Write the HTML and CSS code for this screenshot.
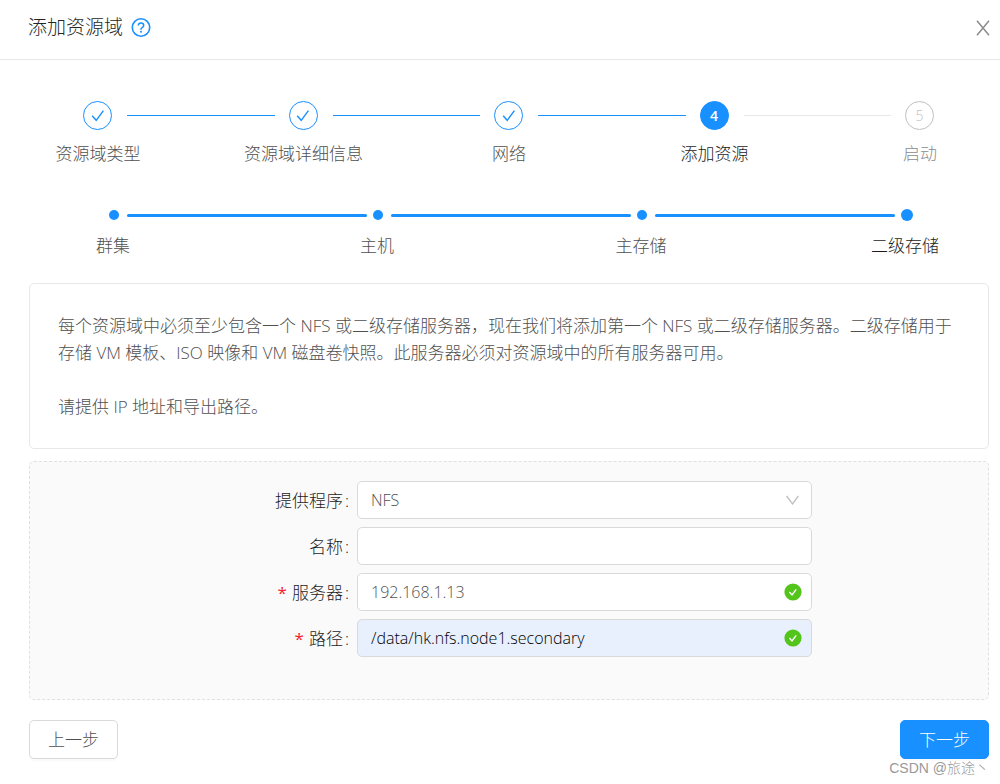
FILE: index.html
```html
<!DOCTYPE html>
<html lang="zh-CN">
<head>
<meta charset="utf-8">
<title>添加资源域</title>
<link rel="stylesheet" href="styles.css">
</head>
<body>
<header class="header">
  <h1 class="title">添加资源域</h1>
  <a class="help" href="#" aria-label="帮助">
    <svg viewBox="0 0 20 20" width="20" height="20" fill="none" stroke="currentColor">
      <circle cx="10" cy="9.5" r="8.7" stroke-width="1.6"/>
      <path d="M7.3 7.6C7.3 5.9 8.4 4.9 10 4.9s2.7 1 2.7 2.5c0 1.2-.8 1.8-1.6 2.3-.7.4-1.1.8-1.1 1.7v.3" stroke-width="1.5"/>
      <circle cx="10" cy="13.7" r="1" fill="currentColor" stroke="none"/>
    </svg>
  </a>
  <button class="close" type="button" aria-label="关闭">
    <svg viewBox="0 0 14 16" width="14" height="16" fill="none" stroke="currentColor" stroke-width="1.5"><path d="M1 .8l12 14.4M13 .8L1 15.2"/></svg>
  </button>
</header>
<main class="content">
  <ol class="steps">
    <li class="step done">
      <div class="head"><span class="circle"><svg viewBox="0 0 14 14" width="14" height="14"><path d="M1.2 6.7l4 4.6L12.4 1.7"/></svg></span></div>
      <div class="label">资源域类型</div>
    </li>
    <li class="step done">
      <div class="head"><span class="circle"><svg viewBox="0 0 14 14" width="14" height="14"><path d="M1.2 6.7l4 4.6L12.4 1.7"/></svg></span></div>
      <div class="label">资源域详细信息</div>
    </li>
    <li class="step done">
      <div class="head"><span class="circle"><svg viewBox="0 0 14 14" width="14" height="14"><path d="M1.2 6.7l4 4.6L12.4 1.7"/></svg></span></div>
      <div class="label">网络</div>
    </li>
    <li class="step active" aria-current="step">
      <div class="head"><span class="circle">4</span></div>
      <div class="label">添加资源</div>
    </li>
    <li class="step">
      <div class="head"><span class="circle">5</span></div>
      <div class="label">启动</div>
    </li>
  </ol>
  <ol class="dots">
    <li class="dot-step"><div class="dot-head"><span class="dot"></span></div><div class="dot-label">群集</div></li>
    <li class="dot-step"><div class="dot-head"><span class="dot"></span></div><div class="dot-label">主机</div></li>
    <li class="dot-step"><div class="dot-head"><span class="dot"></span></div><div class="dot-label">主存储</div></li>
    <li class="dot-step current" aria-current="step"><div class="dot-head"><span class="dot"></span></div><div class="dot-label">二级存储</div></li>
  </ol>
  <section class="intro">
    <p>每个资源域中必须至少包含一个 NFS 或二级存储服务器，现在我们将添加第一个 NFS 或二级存储服务器。二级存储用于存储 VM 模板、ISO 映像和 VM 磁盘卷快照。此服务器必须对资源域中的所有服务器可用。</p>
    <p>请提供 IP 地址和导出路径。</p>
  </section>
  <form id="storage" class="form">
    <div class="row">
      <label for="provider">提供程序<span class="colon">:</span></label>
      <div class="field">
        <select id="provider" class="control"><option>NFS</option></select>
        <svg class="mark" viewBox="0 0 18 18" width="18" height="18" fill="none" stroke="#bfbfbf" stroke-width="1.3"><path d="M2.6 5l5.9 8 5.9-8"/></svg>
      </div>
    </div>
    <div class="row">
      <label for="name">名称<span class="colon">:</span></label>
      <div class="field"><input id="name" class="control" type="text"></div>
    </div>
    <div class="row">
      <label for="server"><span class="required">*</span>服务器<span class="colon">:</span></label>
      <div class="field">
        <input id="server" class="control" type="text" value="192.168.1.13" required>
        <svg class="mark" viewBox="0 0 18 18" width="18" height="18" fill="none"><circle cx="9" cy="9" r="8.6" fill="#52c41a"/><path d="M5.4 9.1l2.6 2.8L12.2 6.3" stroke="#fff" stroke-width="1.4"/></svg>
      </div>
    </div>
    <div class="row">
      <label for="path"><span class="required">*</span>路径<span class="colon">:</span></label>
      <div class="field">
        <input id="path" class="control filled" type="text" value="/data/hk.nfs.node1.secondary" required>
        <svg class="mark" viewBox="0 0 18 18" width="18" height="18" fill="none"><circle cx="9" cy="9" r="8.6" fill="#52c41a"/><path d="M5.4 9.1l2.6 2.8L12.2 6.3" stroke="#fff" stroke-width="1.4"/></svg>
      </div>
    </div>
  </form>
  <div class="actions">
    <button class="button" type="button">上一步</button>
    <button class="button primary" type="submit" form="storage">下一步</button>
  </div>
  <div class="credit">CSDN @旅途丶</div>
</main>
</body>
</html>
```
FILE: styles.css
```css
* {
  box-sizing: border-box;
}

body {
  margin: 0;
  background: #fff;
  color: #505050;
  font-family: "Open Sans", "Noto Sans CJK SC", sans-serif;
  font-size: 17px;
  font-weight: 300;
  line-height: 27px;
}

button,
input,
select {
  font: inherit;
  color: inherit;
}

ol {
  display: flex;
  margin: 0;
  padding: 0;
  list-style: none;
}

.header {
  display: flex;
  align-items: center;
  height: 60px;
  padding: 0 10px 4px 28px;
  border-bottom: 1px solid #e8e8e8;
}

.title {
  margin: 0;
  color: #262626;
  font-size: 19px;
  font-weight: 300;
}

.help {
  display: flex;
  margin-left: 8px;
  color: #1890ff;
}

.close {
  display: flex;
  margin-left: auto;
  padding: 0;
  border: 0;
  background: none;
  color: #8c8c8c;
}

.content {
  padding: 41px 11px 0 29px;
}

.step {
  flex: 1;
  min-width: 0;
}

.step:last-child {
  flex: 0 0 138px;
}

.head {
  display: flex;
  align-items: center;
  gap: 15px;
  margin-right: -40px;
  padding-left: 54px;
}

.step:last-child .head {
  margin-right: 0;
}

.step:not(:last-child) .head::after {
  content: "";
  flex: 1;
  height: 1px;
  background: #e8e8e8;
}

.step.done .head::after {
  background: #1890ff;
}

.circle {
  display: flex;
  flex: none;
  align-items: center;
  justify-content: center;
  width: 29px;
  height: 29px;
  border: 1px solid #bfbfbf;
  border-radius: 50%;
  color: #bfbfbf;
  font-size: 14px;
}

.circle path {
  fill: none;
  stroke: #1890ff;
  stroke-width: 1.4;
}

.done .circle {
  border-color: #1890ff;
}

.active .circle {
  border-color: #1890ff;
  background: #1890ff;
  color: #fff;
  font-weight: 600;
}

.label {
  width: 138px;
  margin-top: 10px;
  color: #8c8c8c;
  text-align: center;
  white-space: nowrap;
}

.done .label {
  color: #505050;
}

.active .label,
.current .dot-label {
  color: #1c1c1c;
}

.dots {
  margin-top: 42px;
}

.dot-step {
  flex: 1;
  min-width: 0;
}

.dot-step:last-child {
  flex: 0 0 168px;
}

.dot-head {
  display: flex;
  align-items: center;
  gap: 8px;
  height: 12px;
  margin-right: -74px;
  padding-left: 80px;
}

.dot-step:last-child .dot-head {
  margin-right: 0;
}

.dot-step:not(:last-child) .dot-head::after {
  content: "";
  flex: 1;
  height: 3px;
  border-radius: 2px;
  background: #1890ff;
}

.dot {
  width: 10px;
  height: 10px;
  border-radius: 50%;
  background: #1890ff;
}

.current .dot {
  width: 12px;
  height: 12px;
}

.dot-label {
  width: 168px;
  margin-top: 11px;
  text-align: center;
}

.intro {
  margin-top: 24px;
  padding: 28px;
  border: 1px solid #e8e8e8;
  border-radius: 5px;
}

.intro p {
  margin: 0;
}

.intro p + p {
  margin-top: 27px;
}

.form {
  display: grid;
  gap: 8px;
  margin-top: 12px;
  padding: 19px 0 42px;
  border: 1px dashed #e0e0e0;
  border-radius: 5px;
  background: #fafafa;
}

.row {
  display: grid;
  grid-template-columns: 327fr 455fr 176fr;
  align-items: center;
}

.row label {
  padding-right: 8px;
  color: #1c1c1c;
  text-align: right;
}

.colon {
  margin-left: 2px;
}

.required {
  margin-right: 5px;
  color: #f5222d;
  font-weight: 400;
}

.field {
  position: relative;
}

.control {
  display: block;
  width: 100%;
  height: 38px;
  padding: 0 40px 0 13px;
  border: 1px solid #d9d9d9;
  border-radius: 5px;
  background: #fff;
  appearance: none;
  font-size: 16px;
}

.filled {
  background: #e8f0fe;
  color: #000;
}

.mark {
  position: absolute;
  top: 10px;
  right: 10px;
  pointer-events: none;
}

.actions {
  display: flex;
  justify-content: space-between;
  margin-top: 20px;
}

.button {
  height: 39px;
  padding: 0 18px;
  border: 1px solid #d9d9d9;
  border-radius: 5px;
  background: #fff;
  box-shadow: 0 2px 0 rgba(0, 0, 0, 0.02);
}

.primary {
  border-color: #1890ff;
  background: #1890ff;
  color: #fff;
}

.credit {
  color: #999;
  font-family: "Liberation Sans", "Noto Sans CJK SC", sans-serif;
  font-size: 14px;
  line-height: 18px;
  text-align: right;
}
```
